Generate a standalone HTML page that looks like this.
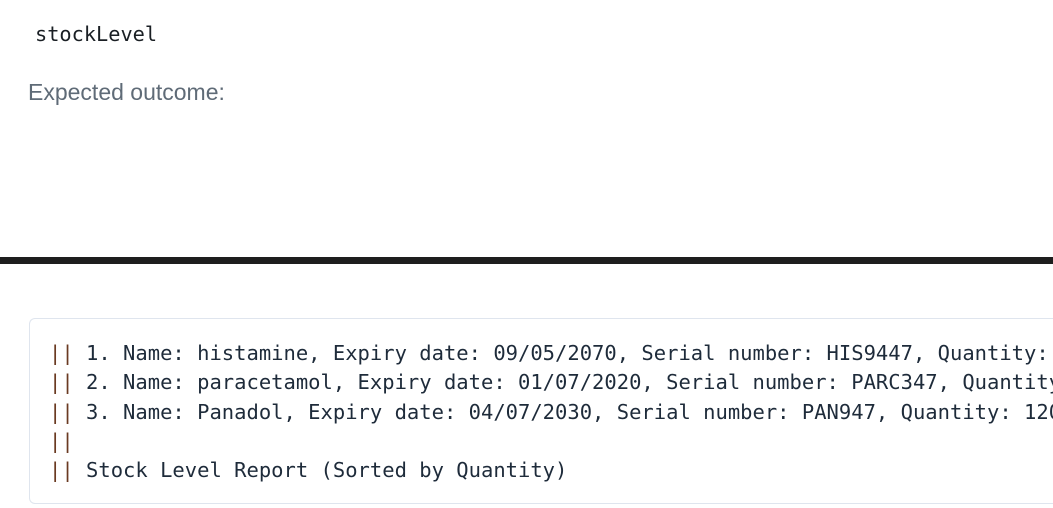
<!DOCTYPE html>
<html><head><style>
html,body{margin:0;padding:0;background:#fff;width:1053px;height:508px;overflow:hidden;position:relative}
.code{position:absolute;left:35px;top:20px;font:20.3px "DejaVu Sans Mono",monospace;color:#1a1f24;line-height:28px}
.exp{position:absolute;left:28px;top:77px;font:23px "Liberation Sans",sans-serif;color:#5f6b77;line-height:30px}
.bar{position:absolute;left:0;top:257px;width:1053px;height:7px;background:#1e1e1e}
.box{position:absolute;left:29px;top:318px;width:1024px;height:186px;border:1px solid #dfe5ee;border-right:none;border-radius:6px 0 0 6px;box-sizing:border-box;overflow:hidden}
pre{position:absolute;left:19px;top:20px;margin:0;font:20.5px "DejaVu Sans Mono",monospace;color:#1e2b3a;line-height:29.3px;white-space:pre}
.p{color:#6a3a22}
</style></head><body>
<div class="code">stockLevel</div>
<div class="exp">Expected outcome:</div>
<div class="bar"></div>
<div class="box"><pre><span class="p">||</span> 1. Name: histamine, Expiry date: 09/05/2070, Serial number: HIS9447, Quantity: 5
<span class="p">||</span> 2. Name: paracetamol, Expiry date: 01/07/2020, Serial number: PARC347, Quantity: 100
<span class="p">||</span> 3. Name: Panadol, Expiry date: 04/07/2030, Serial number: PAN947, Quantity: 120
<span class="p">||</span>
<span class="p">||</span> Stock Level Report (Sorted by Quantity)</pre></div>
</body></html>
